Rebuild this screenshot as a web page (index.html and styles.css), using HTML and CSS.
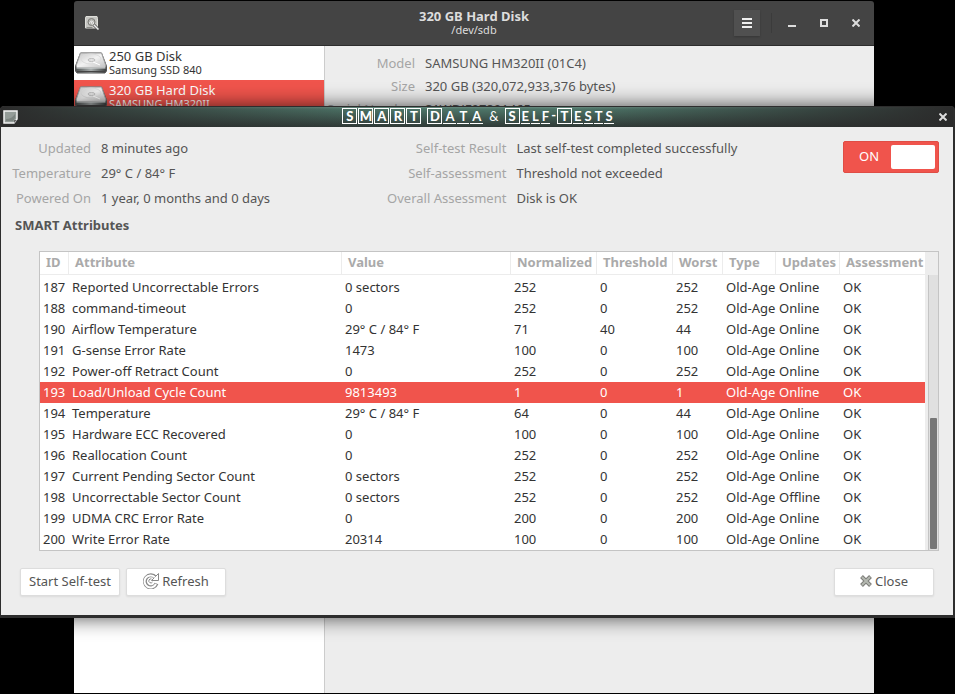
FILE: index.html
```html
<!DOCTYPE html>
<html lang="en">

<head>
  <meta charset="UTF-8" />
  <title>SMART Data &amp; Self-Tests</title>
  <link rel="stylesheet" href="styles.css">
</head>

<body>
  <!-- shared drawings -->
  <svg width="0" height="0" class="defs" aria-hidden="true">
    <defs>
      <linearGradient id="metal" x1="0" y1="0" x2="1" y2="1">
        <stop offset="0" stop-color="#c4c4c4" />
        <stop offset="0.5" stop-color="#f2f2f2" />
        <stop offset="1" stop-color="#c0c0c0" />
      </linearGradient>
      <linearGradient id="edge" x1="0" y1="0" x2="1" y2="0">
        <stop offset="0" stop-color="#4d5151" />
        <stop offset="0.5" stop-color="#a9aeae" />
        <stop offset="1" stop-color="#3a3d3d" />
      </linearGradient>
    </defs>
    <symbol id="disk" viewBox="0 0 32 22">
      <path d="M5.500 1h21l5 13v5l-1.500 2h-28l-1.500-2v-5z" fill="url(#edge)" stroke="#555" />
      <path d="M5.500 1h21l4.500 13-1 1.500h-28l-1-1.500z" fill="url(#metal)" stroke="#a0a0a0" />
      <path d="M1.500 16h29" stroke="#d8dcdc" />
      <path d="M2 19.500h28" stroke="#444" />
      <ellipse cx="16" cy="7" rx="10" ry="5" fill="none" stroke="#dcdcdc" />
      <ellipse cx="16.500" cy="8" rx="3.500" ry="1.500" fill="#e4e4e4" stroke="#bcbcbc" />
      <path d="M18 10l7 3" stroke="#fff" />
    </symbol>
  </svg>

  <div class="window disks">
    <header class="disks-header">
      <svg class="app-icon" width="16" height="16" viewBox="0 0 16 16">
        <path d="M2 1.500h11l.5 2v9.500h-12V3z" fill="#c6c6c2" stroke="#deded9" />
        <circle cx="7.500" cy="7" r="3.500" fill="#b4b4b0" stroke="#7c7c78" />
        <path d="M5.500 8.500c0-3 4-3 4-.5S7 9 7.500 7" fill="none" stroke="#eee" />
        <path d="M10 10l4.500 4.500" stroke="#555" stroke-width="3" />
        <path d="M10 10l4.500 4.500" stroke="#eee" stroke-width="1.500" />
        <path d="M2.500 12.500h6" stroke="#8a8a86" />
      </svg>
      <div class="disks-title">
        <h1>320 GB Hard Disk</h1>
        <p>/dev/sdb</p>
      </div>
      <div class="controls">
        <button class="menu" aria-label="Menu">
          <svg width="10" height="10" viewBox="0 0 10 10"><path d="M0 1h10M0 5h10M0 9h10" stroke="#f0f0f0" stroke-width="2" /></svg>
        </button>
        <button class="control" aria-label="Minimize">
          <svg width="8" height="8" viewBox="0 0 8 8"><path d="M0 7h8" stroke="#ddd" stroke-width="2" /></svg>
        </button>
        <button class="control" aria-label="Maximize">
          <svg width="8" height="8" viewBox="0 0 8 8"><path d="M1 1h6v6H1z" fill="none" stroke="#ddd" stroke-width="2" /></svg>
        </button>
        <button class="control" aria-label="Close window">
          <svg width="8" height="8" viewBox="0 0 8 8"><path d="M.5 .5l7 7M7.500 .5l-7 7" stroke="#ddd" stroke-width="2" /></svg>
        </button>
      </div>
    </header>

    <div class="disks-body">
      <ul class="drives">
        <li class="drive">
          <svg width="32" height="22"><use href="#disk" /></svg>
          <div>
            <div class="drive-name">250 GB Disk</div>
            <div class="drive-model">Samsung SSD 840</div>
          </div>
        </li>
        <li class="drive selected">
          <svg width="32" height="22"><use href="#disk" /></svg>
          <div>
            <div class="drive-name">320 GB Hard Disk</div>
            <div class="drive-model">SAMSUNG HM320II</div>
          </div>
        </li>
      </ul>
      <dl class="drive-info">
        <dt>Model</dt>
        <dd>SAMSUNG HM320II (01C4)</dd>
        <dt>Size</dt>
        <dd>320 GB (320,072,933,376 bytes)</dd>
        <dt>Serial Number</dt>
        <dd>S1WDJF0Z801465</dd>
      </dl>
    </div>
  </div>

  <div class="window dialog" role="dialog" aria-labelledby="dialog-title">
    <header class="dialog-header">
      <svg width="16" height="14" viewBox="0 0 16 14">
        <path d="M1 1h13v8l-3 4H1z" fill="#949c98" stroke="#f4f4f4" stroke-width="1.500" />
        <path d="M3 9c4 0 7-2 9-5v4l-2 3H3z" fill="#7c8480" />
        <path d="M11 13v-3h3z" fill="#666" />
      </svg>
      <h2 class="dialog-title" id="dialog-title">
        <span class="word"><b>S</b><b>M</b><b>A</b><b>R</b><b>T</b></span>
        <span class="word wide"><b>D</b><u>A</u><u>T</u><u>A</u></span>
        <span class="amp">&amp;</span>
        <span class="word"><b>S</b><u>E</u><u>L</u><u>F</u>-<b>T</b><u>E</u><u>S</u><u>T</u><u>S</u></span>
      </h2>
      <button class="control" aria-label="Close dialog">
        <svg width="8" height="8" viewBox="0 0 8 8"><path d="M.5 .5l7 7M7.500 .5l-7 7" stroke="#ddd" stroke-width="2" /></svg>
      </button>
    </header>

    <div class="dialog-body">
      <div class="summary">
        <dl class="summary-info">
          <dt>Updated</dt>
          <dd>8 minutes ago</dd>
          <dt>Self-test Result</dt>
          <dd>Last self-test completed successfully</dd>
          <dt>Temperature</dt>
          <dd>29° C / 84° F</dd>
          <dt>Self-assessment</dt>
          <dd>Threshold not exceeded</dd>
          <dt>Powered On</dt>
          <dd>1 year, 0 months and 0 days</dd>
          <dt>Overall Assessment</dt>
          <dd>Disk is OK</dd>
        </dl>
        <label class="switch" for="smart-on">
          <span>ON</span>
          <input type="checkbox" role="switch" id="smart-on" checked>
        </label>
      </div>

      <h3>SMART Attributes</h3>

      <div class="attributes">
        <table>
          <colgroup>
            <col class="col-id">
            <col>
            <col class="col-value">
            <col class="col-normalized">
            <col class="col-threshold">
            <col class="col-worst">
            <col class="col-type">
            <col class="col-updates">
            <col class="col-assessment">
          </colgroup>
          <thead>
            <tr>
              <th>ID</th>
              <th>Attribute</th>
              <th>Value</th>
              <th>Normalized</th>
              <th>Threshold</th>
              <th>Worst</th>
              <th>Type</th>
              <th>Updates</th>
              <th>Assessment</th>
            </tr>
          </thead>
          <tbody>
            <tr><td>187</td><td>Reported Uncorrectable Errors</td><td>0 sectors</td><td>252</td><td>0</td><td>252</td><td>Old-Age</td><td>Online</td><td>OK</td></tr>
            <tr><td>188</td><td>command-timeout</td><td>0</td><td>252</td><td>0</td><td>252</td><td>Old-Age</td><td>Online</td><td>OK</td></tr>
            <tr><td>190</td><td>Airflow Temperature</td><td>29° C / 84° F</td><td>71</td><td>40</td><td>44</td><td>Old-Age</td><td>Online</td><td>OK</td></tr>
            <tr><td>191</td><td>G-sense Error Rate</td><td>1473</td><td>100</td><td>0</td><td>100</td><td>Old-Age</td><td>Online</td><td>OK</td></tr>
            <tr><td>192</td><td>Power-off Retract Count</td><td>0</td><td>252</td><td>0</td><td>252</td><td>Old-Age</td><td>Online</td><td>OK</td></tr>
            <tr class="selected"><td>193</td><td>Load/Unload Cycle Count</td><td>9813493</td><td>1</td><td>0</td><td>1</td><td>Old-Age</td><td>Online</td><td>OK</td></tr>
            <tr><td>194</td><td>Temperature</td><td>29° C / 84° F</td><td>64</td><td>0</td><td>44</td><td>Old-Age</td><td>Online</td><td>OK</td></tr>
            <tr><td>195</td><td>Hardware ECC Recovered</td><td>0</td><td>100</td><td>0</td><td>100</td><td>Old-Age</td><td>Online</td><td>OK</td></tr>
            <tr><td>196</td><td>Reallocation Count</td><td>0</td><td>252</td><td>0</td><td>252</td><td>Old-Age</td><td>Online</td><td>OK</td></tr>
            <tr><td>197</td><td>Current Pending Sector Count</td><td>0 sectors</td><td>252</td><td>0</td><td>252</td><td>Old-Age</td><td>Online</td><td>OK</td></tr>
            <tr><td>198</td><td>Uncorrectable Sector Count</td><td>0 sectors</td><td>252</td><td>0</td><td>252</td><td>Old-Age</td><td>Offline</td><td>OK</td></tr>
            <tr><td>199</td><td>UDMA CRC Error Rate</td><td>0</td><td>200</td><td>0</td><td>200</td><td>Old-Age</td><td>Online</td><td>OK</td></tr>
            <tr><td>200</td><td>Write Error Rate</td><td>20314</td><td>100</td><td>0</td><td>100</td><td>Old-Age</td><td>Online</td><td>OK</td></tr>
          </tbody>
        </table>
        <div class="scrollbar">
          <div class="track">
            <div class="thumb"></div>
          </div>
        </div>
      </div>

      <div class="actions">
        <button class="button">Start Self-test</button>
        <button class="button">
          <svg width="16" height="16" viewBox="0 0 16 16">
            <path d="M12.500 4.500A6 6 0 1 0 13.500 10.500" fill="none" stroke="#888" stroke-width="4" />
            <path d="M8.500 7.500h7v-7l-2.500 2.500z" fill="#fff" stroke="#888" />
            <path d="M11.800 4.200A6 6 0 1 0 13 11" fill="none" stroke="#fff" stroke-width="2" />
            <path d="M9.500 9a2 2 0 1 1-1-3" fill="none" stroke="#888" />
          </svg>
          Refresh
        </button>
        <button class="button close">
          <svg width="12" height="12" viewBox="0 0 12 12">
            <path d="M1.500 1.500l9 9M10.500 1.500l-9 9" stroke="#7c7c78" stroke-width="4" />
            <path d="M2 2l8 8M10 2l-8 8" stroke="#b4b8b0" stroke-width="2" />
          </svg>
          Close
        </button>
      </div>
    </div>
  </div>
</body>

</html>
```

FILE: styles.css
```css
* {
  box-sizing: border-box;
}

body {
  position: relative;
  height: 100vh;
  margin: 0;
  overflow: hidden;
  background-color: #000000;
  color: #555555;
  font-family: "Noto Sans", "Open Sans", sans-serif;
  font-size: 13px;
  line-height: 20px;
}

h1, h2, h3, p, ul, dl, dd {
  margin: 0;
  padding: 0;
}

button {
  border: 0;
  padding: 0;
  background: transparent;
  font-family: inherit;
  font-size: 13px;
  color: #555555;
}

svg {
  display: block;
  flex: none;
}

.defs {
  position: absolute;
}

.window {
  position: absolute;
}

/* Disks window */
.disks {
  top: 1px;
  bottom: 1px;
  left: 74px;
  right: 81px;
  display: flex;
  flex-direction: column;
  border-radius: 3px 3px 0 0;
  overflow: hidden;
}

.disks-header {
  display: grid;
  grid-template-columns: 1fr auto 1fr;
  align-items: center;
  height: 45px;
  padding: 0 2px;
  background-color: #444444;
  border-bottom: 1px solid #2d2d2d;
  color: #dddddd;
}

.app-icon {
  margin-left: 8px;
}

.disks-title {
  text-align: center;
}

.disks-title h1 {
  font-size: 13px;
  line-height: 14px;
}

.disks-title p {
  font-size: 11px;
  line-height: 14px;
}

.controls {
  display: flex;
  justify-content: flex-end;
  align-items: center;
}

.menu {
  display: flex;
  align-items: center;
  justify-content: center;
  width: 26px;
  height: 26px;
  margin-right: 16px;
  background-color: #505050;
  box-shadow: 0 1px 2px rgba(0, 0, 0, 0.2);
}

.control {
  display: flex;
  align-items: center;
  justify-content: center;
  width: 32px;
  height: 20px;
}

.menu + .control {
  box-shadow: -4px 0 0 #444444, -5px 0 0 #3b3b3b;
}

.disks-body {
  flex: 1;
  display: flex;
  background-color: #ededed;
}

.drives {
  width: 251px;
  list-style: none;
  background-color: #ffffff;
  border-right: 1px solid #cccccc;
}

.drive {
  display: flex;
  align-items: center;
  gap: 2px;
  height: 34px;
  padding: 0 1px 1px;
  color: #333333;
}

.drive-name {
  line-height: 14px;
}

.drive-model {
  font-size: 11px;
  line-height: 13px;
}

.drive.selected {
  color: #ffffff;
}

.selected {
  background-color: #f0544c;
  color: #ffffff;
}

.drive-info {
  flex: 1;
  display: grid;
  grid-template-columns: 90px 1fr;
  align-content: start;
  column-gap: 10px;
  padding-top: 6px;
  line-height: 23px;
}

dt {
  justify-self: end;
  color: #a5a5a5;
  white-space: nowrap;
}

/* SMART dialog */
.dialog {
  top: 106px;
  left: 0;
  right: 0;
  border: solid #2d2d2d;
  border-width: 1px 2px 3px 1px;
  border-radius: 4px 4px 0 0;
  background-color: #ededed;
  box-shadow: 0 0 20px rgba(0, 0, 0, 0.7);
}

.dialog-header {
  display: grid;
  grid-template-columns: 1fr auto 1fr;
  align-items: center;
  height: 20px;
  padding-left: 2px;
  background: linear-gradient(to right, #2b2b2b, transparent 40%, transparent 60%, #2b2b2b),
    linear-gradient(to bottom, #66897e, #4d7568 10%, #303a37);
}

.dialog-header .control {
  justify-self: end;
  width: 20px;
}

.dialog-title {
  display: flex;
  gap: 6px;
  padding-bottom: 2px;
  color: #ffffff;
  font-family: Lato, sans-serif;
  font-size: 13px;
  line-height: 14px;
}

.word {
  display: flex;
  gap: 1px;
}

.word b {
  width: 15px;
  height: 16px;
  border: 1px solid #ffffff;
  text-align: center;
}

.word u {
  height: 16px;
  padding: 1px 1px 0;
  border-bottom: 1px solid #ffffff;
  text-decoration: none;
}

.wide u {
  padding: 1px 2px 0;
}

.amp {
  font-weight: normal;
  line-height: 16px;
}

.dialog-body {
  padding: 9px 14px 19px;
}

.summary {
  display: flex;
  gap: 10px;
}

.summary-info {
  flex: 1;
  display: grid;
  grid-template-columns: 76px 8fr 114px 9fr;
  column-gap: 10px;
  line-height: 25px;
}

.switch {
  display: flex;
  align-items: center;
  justify-content: space-between;
  width: 96px;
  height: 32px;
  margin-top: 5px;
  padding: 0 3px 0 15px;
  border: 1px solid #df4d45;
  border-radius: 2px;
  background-color: #f0544c;
  color: #ffffff;
}

.switch span {
  padding-bottom: 2px;
}

.switch input {
  appearance: none;
  width: 44px;
  height: 24px;
  margin: 0;
  border-radius: 2px;
  background-color: #ffffff;
}

h3 {
  margin: 5px 0 17px;
  font-size: 13px;
  line-height: 18px;
}

.attributes {
  display: flex;
  margin-left: 24px;
  border: 1px solid #c4c4c4;
}

table {
  flex: 1;
  table-layout: fixed;
  border-collapse: separate;
  border-spacing: 0;
  background-color: #ffffff;
  color: #333333;
  white-space: nowrap;
}

.col-id { width: 29px; }
.col-value { width: 169px; }
.col-normalized { width: 86px; }
.col-threshold { width: 76px; }
.col-worst { width: 50px; }
.col-type { width: 53px; }
.col-updates { width: 64px; }
.col-assessment { width: 85px; }

th {
  height: 23px;
  padding: 0 0 2px 6px;
  border-right: 1px solid #ececec;
  border-bottom: 1px solid #ececec;
  color: #aaaaaa;
  line-height: 20px;
  text-align: left;
}

th:last-child {
  border-right: 0;
}

tbody::before {
  content: "";
  display: block;
  height: 2px;
}

td {
  height: 21px;
  padding: 0 0 1px 3px;
  line-height: 20px;
}

tr.selected td {
  background-color: #f0544c;
}

.scrollbar {
  display: flex;
  width: 13px;
  padding: 23px 0 0 3px;
}

.track {
  flex: 1;
  display: flex;
  align-items: flex-end;
  padding: 1px;
  border-left: 1px solid #c4c4c4;
  background-color: #e0e0e0;
}

.thumb {
  width: 100%;
  height: 48%;
  border-radius: 1px;
  background-color: #777777;
}

.actions {
  display: flex;
  gap: 6px;
  margin-top: 17px;
  padding: 0 5px;
}

.button {
  display: flex;
  align-items: center;
  justify-content: center;
  gap: 3px;
  width: 100px;
  height: 28px;
  padding-bottom: 2px;
  border: 1px solid #dddddd;
  border-radius: 2px;
  background-color: #ffffff;
  box-shadow: 0 1px 2px rgba(0, 0, 0, 0.08);
}

.close {
  margin-left: auto;
}
```
